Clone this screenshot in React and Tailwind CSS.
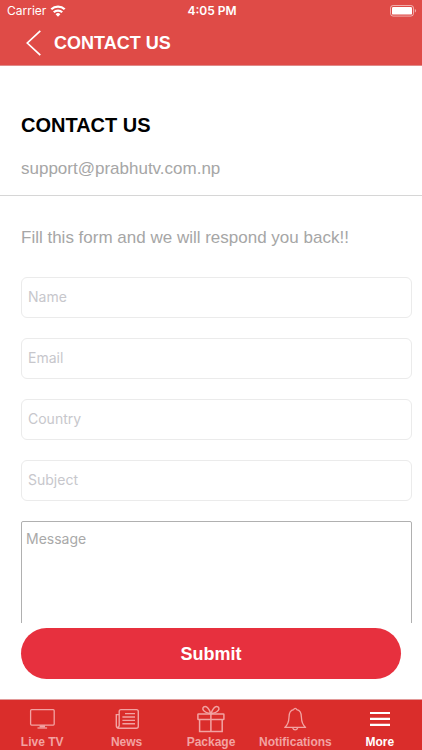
import React from 'react'

const FIELDS = [
  { name: 'name', label: 'Name', type: 'text' },
  { name: 'email', label: 'Email', type: 'email' },
  { name: 'country', label: 'Country', type: 'text' },
  { name: 'subject', label: 'Subject', type: 'text' }
]

function WifiIcon() {
  return (
    <svg width="16" height="12" viewBox="0 0 16 12" fill="none" stroke="currentColor" strokeWidth="2.3" aria-hidden="true">
      <path d="M1.3 4.3a9.6 9.6 0 0 1 13.4 0" />
      <path d="M3.8 7.3a6 6 0 0 1 8.4 0" />
      <path d="M8 11.8L5.6 9.3a3.4 3.4 0 0 1 4.8 0z" fill="currentColor" stroke="none" />
    </svg>
  )
}

function BatteryIcon() {
  return (
    <svg width="27" height="12" viewBox="0 0 27 12" aria-hidden="true">
      <rect x="0.5" y="0.5" width="23" height="10.6" rx="2.6" fill="none" stroke="currentColor" strokeOpacity="0.55" />
      <rect x="2" y="2" width="20" height="7.6" rx="1.2" fill="currentColor" />
      <path d="M24.8 4v3.6c.8-.3 1.3-1 1.3-1.8s-.5-1.5-1.3-1.8z" fill="currentColor" fillOpacity="0.55" />
    </svg>
  )
}

function TvIcon() {
  return (
    <svg width="28" height="28" viewBox="0 0 28 28" fill="none" stroke="currentColor" strokeWidth="1.3" aria-hidden="true">
      <rect x="2.6" y="4.7" width="23.6" height="15.4" rx="1" />
      <path d="M11.6 20.3h5.4v2.2h-5.4z" fill="currentColor" stroke="none" />
      <path d="M9.5 23h9.6" />
    </svg>
  )
}

function NewsIcon() {
  return (
    <svg width="28" height="28" viewBox="0 0 28 28" fill="none" stroke="currentColor" strokeWidth="1.4" aria-hidden="true">
      <path d="M6.2 9.6H3.3v11.2a2.4 2.4 0 0 0 2.4 2.4h17.6a2 2 0 0 0 2-2V6.4a1.8 1.8 0 0 0-1.8-1.8H8a1.8 1.8 0 0 0-1.8 1.8v14.2a1.4 1.4 0 0 1-1.5 1.4" />
      <path d="M12 8.6h10M9.4 12h12.6M9.4 15.4h12.6M9.4 18.8h12.6" />
    </svg>
  )
}

function PackageIcon() {
  return (
    <svg width="28" height="28" viewBox="0 0 28 28" fill="none" stroke="currentColor" strokeWidth="1.5" aria-hidden="true">
      <rect x="0.9" y="9" width="26" height="5.6" rx="0.6" />
      <path d="M2.6 14.6v12h22.6v-12M13.9 9v17.6" />
      <path d="M13.9 8.7C12.3 4.3 10.5 1.4 8.2 1.4c-2.1 0-3.1 2.2-1.7 4 1.3 1.7 4 2.9 7.4 3.3z" />
      <path d="M13.9 8.7c1.6-4.4 3.4-7.3 5.7-7.3 2.1 0 3.1 2.2 1.7 4-1.3 1.7-4 2.9-7.4 3.3z" />
    </svg>
  )
}

function BellIcon() {
  return (
    <svg width="28" height="28" viewBox="0 0 28 28" fill="none" stroke="currentColor" strokeWidth="1.3" strokeLinejoin="round" aria-hidden="true">
      <path d="M3.8 22.4c2.6-2.2 4-4.2 4.2-10.2 0-4.6 2.2-7.2 4.7-7.6.2-.8.8-1.2 1.5-1.2s1.3.4 1.5 1.2c2.5.4 4.7 3 4.7 7.6.2 6 1.6 8 4.2 10.2z" />
      <path d="M11.6 22.6c.4 1.5 1.3 2.3 2.6 2.3s2.2-.8 2.6-2.3" />
    </svg>
  )
}

function MenuIcon() {
  return (
    <svg width="28" height="28" viewBox="0 0 28 28" stroke="currentColor" strokeWidth="2.2" aria-hidden="true">
      <path d="M4 8h20M4 13.9h20M4 19.8h20" />
    </svg>
  )
}

const TABS = [
  { label: 'Live TV', Icon: TvIcon },
  { label: 'News', Icon: NewsIcon },
  { label: 'Package', Icon: PackageIcon },
  { label: 'Notifications', Icon: BellIcon },
  { label: 'More', Icon: MenuIcon, active: true }
]

function StatusBar() {
  return (
    <div className="grid grid-cols-3 items-center h-[22px] pl-[7px] pr-[5px] font-[Inter,sans-serif] text-xs">
      <div className="flex items-center gap-1">
        <span>Carrier</span>
        <WifiIcon />
      </div>
      <span className="text-center font-semibold">4:05 PM</span>
      <div className="flex justify-end">
        <BatteryIcon />
      </div>
    </div>
  )
}

function Header() {
  return (
    <header className="shrink-0 bg-[#df4b47] text-white border-b border-[#e08a88]">
      <StatusBar />
      <div className="flex items-center gap-3 h-[43px] pl-[26px] pb-[2px]">
        <button type="button" aria-label="Back">
          <svg width="16" height="26" viewBox="0 0 16 26" fill="none" stroke="currentColor" strokeWidth="1.7" aria-hidden="true">
            <path d="M14.3 0.8L1.3 13l13 12.2" />
          </svg>
        </button>
        <span className="text-lg font-bold">CONTACT US</span>
      </div>
    </header>
  )
}

function TabBar() {
  return (
    <nav className="shrink-0 grid grid-cols-5 bg-[#da2d2b] border-t border-[#e29a99]">
      {TABS.map(({ label, Icon, active }) => (
        <a
          key={label}
          href="#"
          aria-current={active ? 'page' : undefined}
          className={`flex flex-col items-center gap-px pt-[5px] text-xs font-bold ${active ? 'text-white' : 'text-[#f2a3a2]'}`}
        >
          <Icon />
          <span>{label}</span>
        </a>
      ))}
    </nav>
  )
}

export default function App() {
  return (
    <div className="flex flex-col h-screen bg-white font-['Liberation_Sans',Arial,sans-serif]">
      <Header />

      <main className="flex-1 min-h-0 overflow-y-auto [scrollbar-width:none]">
        <section className="px-[21px] pt-[45px] pb-[14px] border-b border-[#d6d6d6]">
          <h1 className="text-xl font-bold text-black">CONTACT US</h1>
          <p className="mt-[18px] text-[17px] leading-6 text-[#a6a6a6]">support@prabhutv.com.np</p>
        </section>

        <form id="contact" className="flex flex-col gap-5 pl-[21px] pr-[10px] pt-[30px]">
          <p className="mb-[7px] text-[17px] leading-6 text-[#a6a6a6]">Fill this form and we will respond you back!!</p>
          {FIELDS.map((field) => (
            <input
              key={field.name}
              type={field.type}
              name={field.name}
              aria-label={field.label}
              placeholder={field.label}
              className="w-full h-[41px] px-[6px] pb-[2px] rounded-md border border-[#ebebeb] font-[Inter,sans-serif] text-sm placeholder:text-[#c7c7cc]"
            />
          ))}
          <textarea
            name="message"
            aria-label="Message"
            placeholder="Message"
            className="w-full h-[150px] px-1 py-[7px] rounded-xs border border-[#b0b0b0] resize-none font-[Inter,sans-serif] text-sm placeholder:text-[#a9a9a9]"
          />
        </form>
      </main>

      <div className="shrink-0 px-[21px] pt-[5px] pb-5">
        <button
          type="submit"
          form="contact"
          className="w-full h-[51px] rounded-full bg-[#e7303e] text-white text-lg font-bold"
        >
          Submit
        </button>
      </div>

      <TabBar />
    </div>
  )
}
